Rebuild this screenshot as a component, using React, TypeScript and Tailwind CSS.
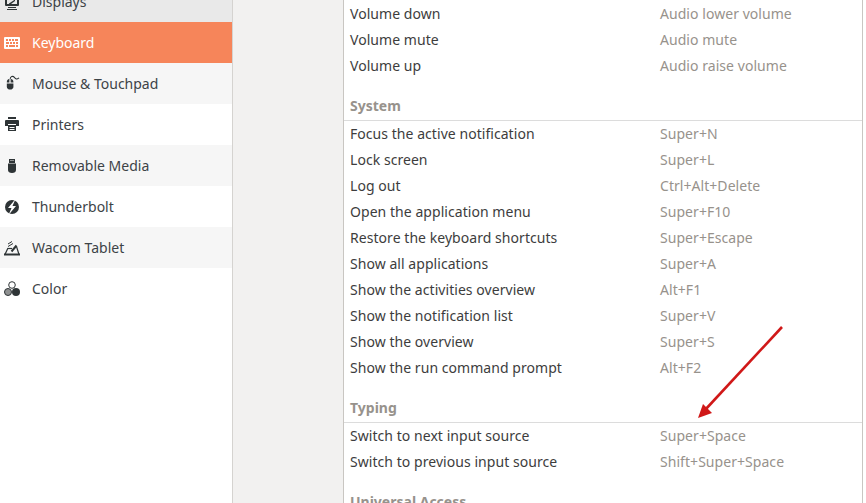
const font = "font-['Noto_Sans','Open_Sans',sans-serif]";

function DisplayIcon() {
    return (
        <svg width="16" height="16" viewBox="0 0 16 16" fill="#2e3436">
            <path fillRule="evenodd" d="M2 0h12a1 1 0 0 1 1 1v10a1 1 0 0 1-1 1H2a1 1 0 0 1-1-1V1a1 1 0 0 1 1-1zm1 2v8h10V2z" />
            <path d="M5 9.500 11 5.500v1.500L7 10H5z" />
            <path d="M4 13h8v1H4zM3 15h10v1H3z" />
        </svg>
    );
}

function KeyboardIcon() {
    return (
        <svg width="16" height="12" viewBox="0 0 16 12" fill="#fff">
            <path
                fillRule="evenodd"
                d="M1 0h14a1 1 0 0 1 1 1v10a1 1 0 0 1-1 1H1a1 1 0 0 1-1-1V1a1 1 0 0 1 1-1zm1 2v2h2V2zm3 0v2h2V2zm3 0v2h2V2zm3 0v2h3V2zM2 5v2h3V5zm4 0v2h2V5zm3 0v2h2V5zm3 0v2h2V5zM2 8v2h2V8zm3 0v2h6V8zm7 0v2h2V8z"
            />
        </svg>
    );
}

function MouseIcon() {
    return (
        <svg width="17" height="17" viewBox="0 -1 17 17" fill="#2e3436">
            <path d="M3 6c0-2 1-3 2.500-3.300V6.500H3zM7.500 2.700C9 3 10 4 10 6v.5H7.500z" />
            <path d="M6 3h1v3.500H6z" opacity="0.6" />
            <path d="M3 7.500h7V11c0 2-1.500 3-3.500 3S3 13 3 11z" />
            <path d="M6.500 3C6.500 0 9.500-1 11 1s2.500 2.500 5 .5" fill="none" stroke="#2e3436" strokeWidth="1.100" />
        </svg>
    );
}

function PrinterIcon() {
    return (
        <svg width="16" height="16" viewBox="0 0 16 16" fill="#2e3436">
            <path d="M4 0h8v2H4z" />
            <path d="M2 3h12a1 1 0 0 1 1 1v5h-3V7H4v2H1V4a1 1 0 0 1 1-1z" />
            <path fillRule="evenodd" d="M4 8h8v6H4zm1.500 2v1h5v-1zm0 2v1h5v-1z" />
        </svg>
    );
}

function UsbIcon() {
    return (
        <svg width="16" height="16" viewBox="0 0 16 16" fill="#2e3436">
            <path fillRule="evenodd" d="M5 1h6v4H5zm1.500 1v1h1V2zm2 0v1h1V2z" />
            <path d="M4 5.500h8V12c0 2-1.500 3-4 3s-4-1-4-3z" />
        </svg>
    );
}

function BoltIcon() {
    return (
        <svg width="16" height="16" viewBox="0 0 16 16">
            <circle cx="8" cy="8" r="7" fill="#2e3436" />
            <path d="M11.500 0 4 9h3.500L4.500 16 12 7H8.500z" fill="#fff" />
        </svg>
    );
}

function TabletIcon() {
    return (
        <svg width="16" height="16" viewBox="0 0 16 16" fill="none" stroke="#2e3436">
            <path d="M4 8 1 14.500h14L12.500 6.500" strokeWidth="1.200" />
            <path d="M0 14.500h16" strokeWidth="2" />
            <path d="M4 8.500h4" strokeWidth="1.200" />
            <path d="m7.500 11.500 5-6" strokeWidth="2" />
            <path d="M4 4 8 1.500M4 6.500l5-3" strokeWidth="1" />
        </svg>
    );
}

function ColorIcon() {
    return (
        <svg width="16" height="16" viewBox="0 0 16 16">
            <circle cx="8" cy="4" r="3.300" fill="#fff" stroke="#2e3436" />
            <circle cx="4" cy="11" r="3.500" fill="#8f9191" stroke="#2e3436" />
            <circle cx="12" cy="11" r="4" fill="#2e3436" />
        </svg>
    );
}

const sideItems = [
    { label: "Displays", icon: <DisplayIcon />, bg: "bg-[#e9e9e9]" },
    { label: "Keyboard", icon: <KeyboardIcon />, bg: "bg-[#f6855a] text-white" },
    { label: "Mouse & Touchpad", icon: <MouseIcon />, bg: "bg-[#f6f6f6]" },
    { label: "Printers", icon: <PrinterIcon />, bg: "bg-white" },
    { label: "Removable Media", icon: <UsbIcon />, bg: "bg-[#f6f6f6]" },
    { label: "Thunderbolt", icon: <BoltIcon />, bg: "bg-white" },
    { label: "Wacom Tablet", icon: <TabletIcon />, bg: "bg-[#f6f6f6]" },
    { label: "Color", icon: <ColorIcon />, bg: "bg-white" },
];

const volumeRows = [
    ["Volume down", "Audio lower volume"],
    ["Volume mute", "Audio mute"],
    ["Volume up", "Audio raise volume"],
];

const systemRows = [
    ["Focus the active notification", "Super+N"],
    ["Lock screen", "Super+L"],
    ["Log out", "Ctrl+Alt+Delete"],
    ["Open the application menu", "Super+F10"],
    ["Restore the keyboard shortcuts", "Super+Escape"],
    ["Show all applications", "Super+A"],
    ["Show the activities overview", "Alt+F1"],
    ["Show the notification list", "Super+V"],
    ["Show the overview", "Super+S"],
    ["Show the run command prompt", "Alt+F2"],
];

const typingRows = [
    ["Switch to next input source", "Super+Space"],
    ["Switch to previous input source", "Shift+Super+Space"],
];

function Rows({ rows }: { rows: string[][] }) {
    return (
        <>
            {rows.map(([name, keys]) => (
                <div key={name} className="flex h-[26px] items-center pb-[2px] pl-[6px] text-[14px] tracking-[0.05px]">
                    <span className="w-[310px] text-[#3d3d3d]">{name}</span>
                    <span className="text-[#97928c]">{keys}</span>
                </div>
            ))}
        </>
    );
}

function Section({ title, rows }: { title: string; rows: string[][] }) {
    return (
        <>
            <div className="mt-[14px] flex h-[28px] items-center border-b border-[#dcdcdc] pb-[2px] pl-[6px] text-[14px] font-bold text-[#97928c]">
                {title}
            </div>
            <Rows rows={rows} />
        </>
    );
}

export default function App() {
    return (
        <div className={`relative flex h-[503px] w-[866px] overflow-hidden bg-[#f2f1f0] ${font}`}>
            <div className="w-[233px] shrink-0 border-r border-[#d5d3d0] bg-white">
                <div className="-mt-[19px]">
                    {sideItems.map((item) => (
                        <div key={item.label} className={`flex h-[41px] items-center gap-[12px] text-[14px] text-[#3d4347] ${item.bg}`}>
                            <span className="ml-[4px] flex w-[16px] justify-center">{item.icon}</span>
                            <span>{item.label}</span>
                        </div>
                    ))}
                </div>
            </div>
            <div className="ml-[110px] w-[520px] shrink-0 border-x border-[#c9c6c2] bg-white pt-px">
                <Rows rows={volumeRows} />
                <Section title="System" rows={systemRows} />
                <Section title="Typing" rows={typingRows} />
                <Section title="Universal Access" rows={[]} />
            </div>
            <div className="grow bg-white" />
            <svg className="absolute left-[690px] top-[320px]" width="100" height="105" viewBox="690 320 100 105">
                <path d="M782 327 705 410" stroke="#d01818" strokeWidth="2.600" fill="none" />
                <path d="M698 418 703 404 712 413z" fill="#d01818" />
            </svg>
        </div>
    );
}
